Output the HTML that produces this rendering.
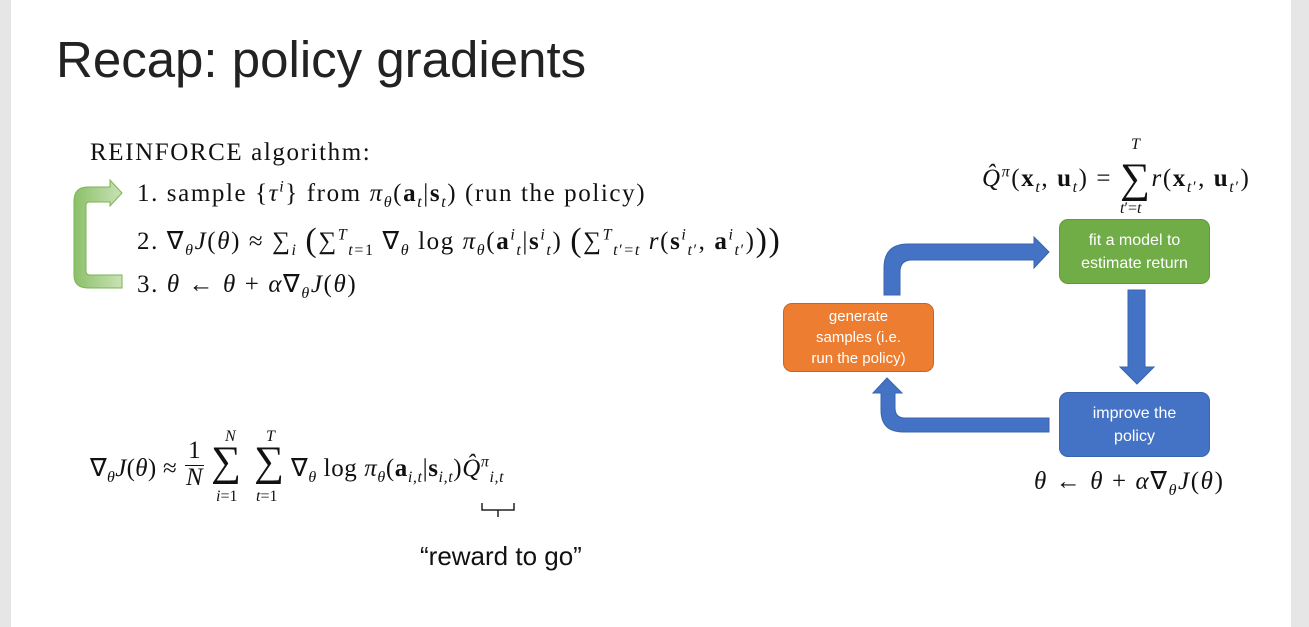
<!DOCTYPE html>
<html><head><meta charset="utf-8"><style>
body{margin:0;width:1309px;height:627px;background:#e6e6e6;position:relative;overflow:hidden;font-family:"Liberation Serif",serif;color:#111}
.page{position:absolute;left:11px;top:0;width:1280px;height:627px;background:#fff}
.a{position:absolute;white-space:nowrap}
.s{font-family:"Liberation Serif",serif;font-size:25px;line-height:30px;letter-spacing:1.6px}
i{font-style:italic}
b{font-weight:bold}
.box{position:absolute;border-radius:9px;color:#fff;font-family:"Liberation Sans",sans-serif;font-size:15px;text-align:center;display:flex;align-items:center;justify-content:center;line-height:21px}
sub,sup{font-size:16px;line-height:0}
.bp{font-size:34px;line-height:0;position:relative;top:2px}
</style></head><body>
<div class="page"></div>
<div class="a" style="left:56px;top:30px;font-family:'Liberation Sans',sans-serif;font-size:51px;color:#222">Recap: policy gradients</div>
<div class="a s" style="left:90px;top:138px">REINFORCE algorithm:</div>
<div class="a s" style="left:137px;top:179px">1. sample {<i>τ</i><sup><i>i</i></sup>} from <i>π</i><sub><i>θ</i></sub>(<b>a</b><sub><i>t</i></sub>|<b>s</b><sub><i>t</i></sub>) (run the policy)</div>
<div class="a s" style="left:137px;top:227px">2. ∇<sub><i>θ</i></sub><i>J</i>(<i>θ</i>) ≈ ∑<sub><i>i</i></sub> <span class="bp">(</span>∑<sup><i>T</i></sup><sub><i>t</i>=1</sub> ∇<sub><i>θ</i></sub> log <i>π</i><sub><i>θ</i></sub>(<b>a</b><sup><i>i</i></sup><sub><i>t</i></sub>|<b>s</b><sup><i>i</i></sup><sub><i>t</i></sub>) <span class="bp">(</span>∑<sup><i>T</i></sup><sub><i>t</i>′=<i>t</i></sub> <i>r</i>(<b>s</b><sup><i>i</i></sup><sub><i>t</i>′</sub>, <b>a</b><sup><i>i</i></sup><sub><i>t</i>′</sub>)<span class="bp">))</span></div>
<div class="a s" style="left:137px;top:270px">3. <i>θ</i> ← <i>θ</i> + <i>α</i>∇<sub><i>θ</i></sub><i>J</i>(<i>θ</i>)</div>
<svg class="a" style="left:0;top:0" width="1309" height="627">
<defs><linearGradient id="g" x1="0" x2="1"><stop offset="0" stop-color="#8cc068"/><stop offset="1" stop-color="#c9e2b6"/></linearGradient></defs>
<path d="M122 193 L110 180 L110 187 L88 187 Q74 187 74 201 L74 275 Q74 288 88 288 L122 288 L122 275 L90 275 Q86 275 86 271 L86 205 Q86 202 90 202 L110 202 L110 206 Z" fill="url(#g)" stroke="#7ab356" stroke-width="1"/>
<g fill="#4472c4" stroke="#3a64ad" stroke-width="1">
<path d="M884 295 L884 268 Q884 244 908 244 L1034 244 L1034 237 L1049 252 L1034 268 L1034 260 L912 260 Q900 260 900 272 L900 295 Z"/>
<path d="M1128 290 L1145 290 L1145 367 L1154 367 L1137 384 L1120 367 L1128 367 Z"/>
<path d="M1049 418 L905 418 Q895 418 895 408 L895 393 L902 393 L887 378 L873 393 L881 393 L881 410 Q881 432 903 432 L1049 432 Z"/>
</g>
<path d="M482 503 L482 510 L498 510 L498 517 M498 510 L514 510 L514 503" stroke="#222" stroke-width="1.5" fill="none"/>
</svg>
<div class="box" style="left:1059px;top:219px;width:149px;height:63px;background:#70ad47;border:1px solid #5f9a3a;font-size:16px;line-height:23px">fit a model to<br>estimate return</div>
<div class="box" style="left:783px;top:303px;width:149px;height:67px;background:#ed7d31;border:1px solid #c9641f">generate<br>samples (i.e.<br>run the policy)</div>
<div class="box" style="left:1059px;top:392px;width:149px;height:63px;background:#4472c4;border:1px solid #3a64ad;font-size:16px;line-height:23px">improve the<br>policy</div>
<div class="a s" style="left:982px;top:164px"><i>Q̂</i><sup><i>π</i></sup>(<b>x</b><sub><i>t</i></sub>, <b>u</b><sub><i>t</i></sub>) = <span style="font-size:42px;line-height:0;position:relative;top:6px">∑</span><i>r</i>(<b>x</b><sub><i>t</i>′</sub>, <b>u</b><sub><i>t</i>′</sub>)</div>
<div class="a" style="left:1131px;top:136px;font-size:16px"><i>T</i></div>
<div class="a" style="left:1120px;top:200px;font-size:16px"><i>t</i>′=<i>t</i></div>
<div class="a s" style="left:1034px;top:467px"><i>θ</i> ← <i>θ</i> + <i>α</i>∇<sub><i>θ</i></sub><i>J</i>(<i>θ</i>)</div>
<div class="a s" style="left:90px;top:454px;letter-spacing:0.3px">∇<sub><i>θ</i></sub><i>J</i>(<i>θ</i>) ≈</div>
<div class="a s" style="left:186px;top:437px;text-align:center;line-height:27px;letter-spacing:0">1<br><i>N</i></div>
<div style="position:absolute;left:185px;top:465px;width:19px;height:1px;background:#111"></div>
<div class="a" style="left:211px;top:440px;font-size:42px;line-height:44px">∑</div>
<div class="a" style="left:225px;top:428px;font-size:16px"><i>N</i></div>
<div class="a" style="left:216px;top:488px;font-size:16px"><i>i</i>=1</div>
<div class="a" style="left:254px;top:440px;font-size:42px;line-height:44px">∑</div>
<div class="a" style="left:266px;top:428px;font-size:16px"><i>T</i></div>
<div class="a" style="left:256px;top:488px;font-size:16px"><i>t</i>=1</div>
<div class="a s" style="left:291px;top:454px;letter-spacing:0.6px">∇<sub><i>θ</i></sub> log <i>π</i><sub><i>θ</i></sub>(<b>a</b><sub><i>i,t</i></sub>|<b>s</b><sub><i>i,t</i></sub>)<i>Q̂</i><sup><i>π</i></sup><sub><i>i,t</i></sub></div>
<div class="a" style="left:420px;top:541px;font-family:'Liberation Sans',sans-serif;font-size:26px">“reward to go”</div>
</body></html>
